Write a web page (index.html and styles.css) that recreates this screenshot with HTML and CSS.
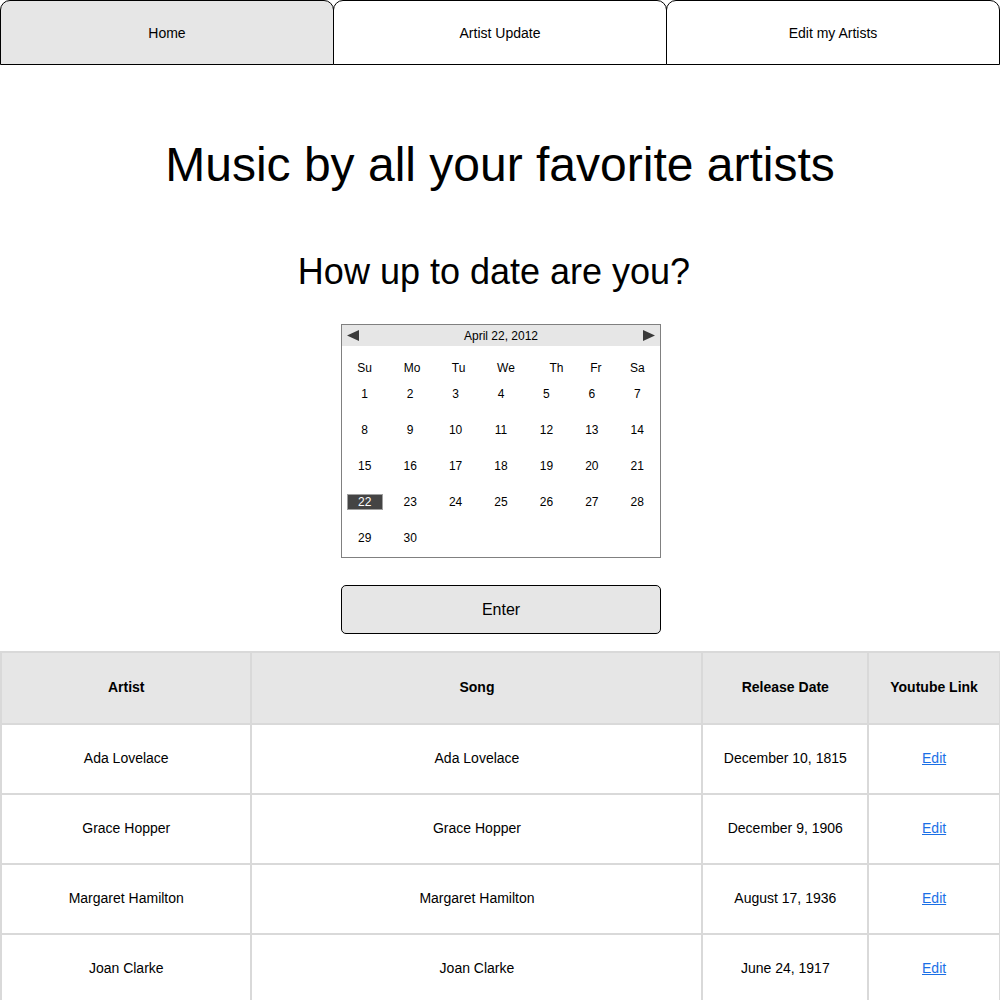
FILE: index.html
```html
<!DOCTYPE html>
<html>
<head>
<meta charset="utf-8">
<link rel="stylesheet" href="styles.css">
</head>
<body>
<nav class="tabs">
  <div class="tab active">Home</div>
  <div class="tab">Artist Update</div>
  <div class="tab">Edit my Artists</div>
</nav>
<h1 class="title">Music by all your favorite artists</h1>
<h2 class="subtitle">How up to date are you?</h2>
<div class="calendar">
  <div class="cal-head">
    <svg class="arrow" width="12" height="11" viewBox="0 0 12 11"><polygon points="0,5.5 12,0 12,11" fill="#3a3a3a"/></svg>
    <span class="cal-title">April 22, 2012</span>
    <svg class="arrow" width="12" height="11" viewBox="0 0 12 11"><polygon points="12,5.5 0,0 0,11" fill="#3a3a3a"/></svg>
  </div>
  <div class="cal-days">
    <span>Su</span><span class="off2">Mo</span><span class="off3">Tu</span><span class="off5">We</span><span class="off10">Th</span><span class="off4">Fr</span><span>Sa</span>
  </div>
  <div class="cal-grid">
    <span>1</span><span>2</span><span>3</span><span>4</span><span>5</span><span>6</span><span>7</span>
    <span>8</span><span>9</span><span>10</span><span>11</span><span>12</span><span>13</span><span>14</span>
    <span>15</span><span>16</span><span>17</span><span>18</span><span>19</span><span>20</span><span>21</span>
    <span><b class="sel">22</b></span><span>23</span><span>24</span><span>25</span><span>26</span><span>27</span><span>28</span>
    <span>29</span><span>30</span>
  </div>
</div>
<button class="enter">Enter</button>
<table class="songs">
  <colgroup><col class="c1"><col class="c2"><col class="c3"><col class="c4"></colgroup>
  <thead>
    <tr><th>Artist</th><th>Song</th><th>Release Date</th><th>Youtube Link</th></tr>
  </thead>
  <tbody>
    <tr><td>Ada Lovelace</td><td>Ada Lovelace</td><td>December 10, 1815</td><td><a href="#">Edit</a></td></tr>
    <tr><td>Grace Hopper</td><td>Grace Hopper</td><td>December 9, 1906</td><td><a href="#">Edit</a></td></tr>
    <tr><td>Margaret Hamilton</td><td>Margaret Hamilton</td><td>August 17, 1936</td><td><a href="#">Edit</a></td></tr>
    <tr><td>Joan Clarke</td><td>Joan Clarke</td><td>June 24, 1917</td><td><a href="#">Edit</a></td></tr>
  </tbody>
</table>
</body>
</html>
```

FILE: styles.css
```css
* { box-sizing: border-box; }
body {
  margin: 0;
  font-family: "Liberation Sans", Arial, sans-serif;
  color: #000;
  background: #fff;
}
.tabs {
  display: flex;
  height: 65px;
}
.tab {
  flex: 1;
  border: 1px solid #000;
  border-radius: 10px 10px 0 0;
  display: flex;
  align-items: center;
  justify-content: center;
  font-size: 14px;
  background: #fff;
  padding-top: 1px;
}
.tab + .tab { margin-left: -1px; }
.tab.active { background: #e6e6e6; }

.title {
  margin: 72px 0 0;
  font-size: 48px;
  line-height: 56px;
  font-weight: normal;
  text-align: center;
}
.subtitle {
  margin: 58px 0 0;
  padding-right: 12px;
  font-size: 36px;
  line-height: 42px;
  font-weight: normal;
  text-align: center;
}
.calendar {
  width: 320px;
  margin: 31px 0 0 341px;
  border: 1px solid #808080;
  font-size: 12px;
  padding-bottom: 1px;
}
.cal-head {
  height: 21px;
  background: #e6e6e6;
  display: flex;
  align-items: center;
  justify-content: space-between;
  padding: 0 5px 0 5px;
}
.cal-title { line-height: 14px; padding-top: 1px; }
.cal-days {
  display: grid;
  grid-template-columns: repeat(7, 1fr);
  height: 30px;
  padding-top: 14px;
  line-height: 16px;
  text-align: center;
}
.off2 { position: relative; left: 2px; }
.off3 { position: relative; left: 3px; }
.off4 { position: relative; left: 4px; }
.off5 { position: relative; left: 5px; }
.off10 { position: relative; left: 10px; }
.cal-grid {
  display: grid;
  grid-template-columns: repeat(7, 1fr);
  grid-auto-rows: 36px;
  text-align: center;
  line-height: 36px;
}
.cal-grid span { display: flex; align-items: center; justify-content: center; }
.sel {
  display: inline-block;
  width: 36px;
  height: 16px;
  line-height: 14px;
  background: #444;
  color: #fff;
  border: 1px solid #a0a0a0;
  font-weight: normal;
}
.enter {
  display: block;
  width: 320px;
  height: 49px;
  margin: 27px 0 0 341px;
  border: 1px solid #000;
  border-radius: 5px;
  background: #e6e6e6;
  font-family: "Liberation Sans", Arial, sans-serif;
  font-size: 16px;
  color: #000;
  padding: 0;
}
.songs {
  margin-top: 17px;
  width: 1001px;
  border-collapse: collapse;
  font-size: 14px;
  text-align: center;
}
.c1 { width: 251px; }
.c2 { width: 452px; }
.c3 { width: 166px; }
.c4 { width: 132px; }
.songs th, .songs td {
  border: 2px solid #d9d9d9;
  padding: 0 0 2px;
}
.songs th {
  height: 72px;
  background: #e6e6e6;
  font-weight: bold;
}
.songs td { height: 70px; }
.songs a { color: #1a6fe6; }
```
